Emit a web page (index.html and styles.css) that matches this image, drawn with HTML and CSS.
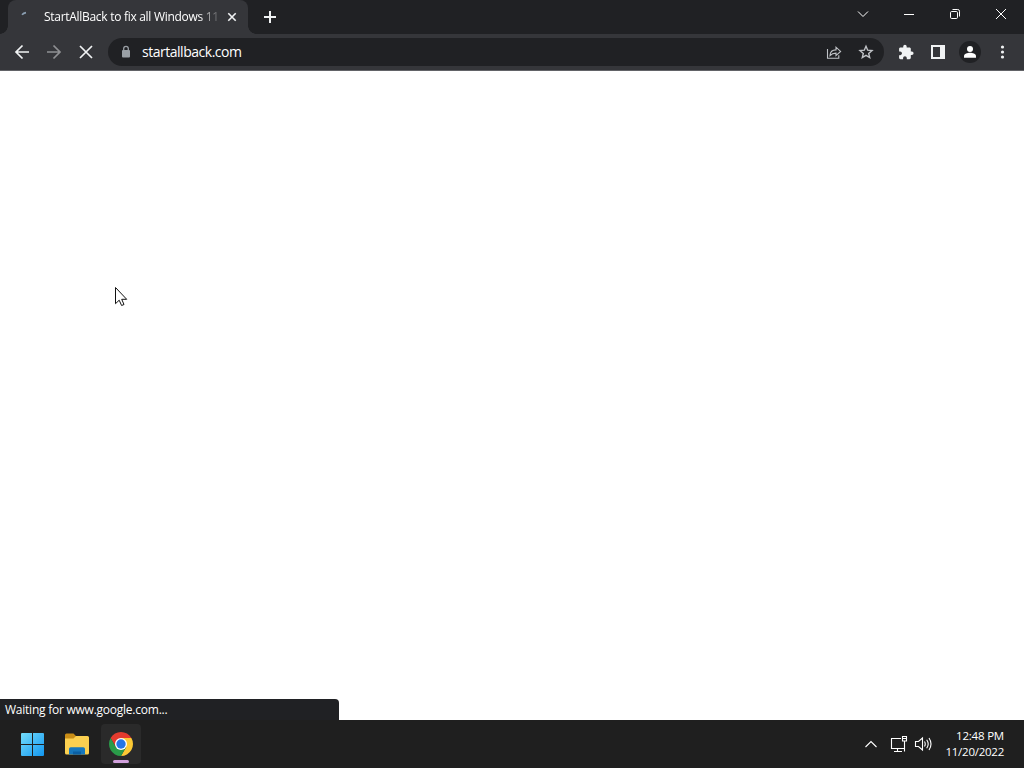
FILE: index.html
```html
<!DOCTYPE html>
<html lang="en">
<head>
<meta charset="utf-8">
<title>Desktop</title>
<link rel="stylesheet" href="styles.css">
</head>
<body>
<div class="desktop">
  <header class="tabstrip">
    <div class="tab">
      <svg class="spinner" width="16" height="16" viewBox="0 0 16 16"><path d="M2 7.700 Q3.500 6 6 5.600" fill="none" stroke="#8b9fb2" stroke-width="1.600"/></svg>
      <span class="tab-title">StartAllBack to fix all Windows 11</span>
      <svg class="tab-close" width="16" height="16" viewBox="0 0 16 16"><path d="M4.300 4.300l7.400 7.400M11.700 4.300l-7.400 7.400" stroke="#f1f3f4" stroke-width="1.600"/></svg>
    </div>
    <svg class="new-tab" width="28" height="28" viewBox="0 0 28 28"><path d="M14 8v12M8 14h12" stroke="#f1f3f4" stroke-width="2"/></svg>
    <div class="window-controls">
      <svg width="46" height="28" viewBox="0 0 46 28"><path d="M18 11.500l5 5 5-5"/></svg>
      <svg width="46" height="28" viewBox="0 0 46 28"><path d="M18 14.500h10"/></svg>
      <svg width="46" height="28" viewBox="0 0 46 28"><rect x="18.500" y="11.500" width="7" height="7" rx="1.200"/><path d="M20.500 9.500h5.200a1.800 1.800 0 0 1 1.800 1.800v5.200"/></svg>
      <svg width="46" height="28" viewBox="0 0 46 28"><path d="M18 9l10 10M28 9L18 19"/></svg>
    </div>
  </header>
  <nav class="toolbar">
    <svg class="tool" viewBox="0 0 28 28"><path d="M21 14H8.500M14.500 7.500L8 14l6.500 6.500" class="line"/></svg>
    <svg class="tool dim" viewBox="0 0 28 28"><path d="M7 14h12.500M13.500 7.500L20 14l-6.500 6.500" class="line"/></svg>
    <svg class="tool" viewBox="0 0 28 28"><path d="M8 8l12 12M20 8L8 20" class="line"/></svg>
    <div class="omnibox">
      <svg class="lock" width="16" height="16" viewBox="0 0 16 16"><path d="M5.700 7V4.600a2.300 2.300 0 0 1 4.600 0V7" fill="none" stroke="#9aa0a6" stroke-width="1.300"/><rect x="4" y="6" width="8" height="7.500" rx="1" fill="#9aa0a6"/></svg>
      <span class="url">startallback.com</span>
      <svg class="box-icon" width="18" height="18" viewBox="0 0 18 18"><path d="M2.500 6v9.300h11.300v-3M5 12.500c.2-4 2.500-5.600 6-5.600V4.200l4.600 4.200L11 12.600v-2.500c-2.700 0-4.500.8-6 2.400z"/></svg>
      <svg class="box-icon" width="18" height="18" viewBox="0 0 18 18"><path d="M9 3.200l1.700 4 4.300.4-3.300 2.800 1 4.200L9 12.400l-3.700 2.200 1-4.200L3 7.600l4.300-.4z" stroke-width="1.400"/></svg>
    </div>
    <svg class="tool" viewBox="0 0 28 28"><path transform="translate(5.700 6) scale(.69)" fill="#f1f3f4" d="M20.500 11H19V7c0-1.100-.9-2-2-2h-4V3.500a2.500 2.500 0 0 0-5 0V5H4c-1.100 0-1.990.9-1.990 2v3.800H3.500c1.490 0 2.700 1.210 2.700 2.700s-1.210 2.700-2.700 2.700H2V20c0 1.100.9 2 2 2h3.800v-1.500c0-1.490 1.210-2.700 2.700-2.700s2.700 1.210 2.700 2.700V22H17c1.100 0 2-.9 2-2v-4h1.500a2.500 2.500 0 0 0 0-5z"/></svg>
    <svg class="tool" viewBox="0 0 28 28"><path fill="#f1f3f4" fill-rule="evenodd" d="M7 7h14v14H7zM9 9v10h7V9z"/></svg>
    <svg class="tool" viewBox="0 0 28 28"><circle cx="14" cy="14" r="11" fill="#202124"/><circle cx="14" cy="10.900" r="3" fill="#fff"/><path d="M8 19.800v-1.600c0-2.400 3.500-3.400 6-3.400s6 1 6 3.400v1.600z" fill="#fff"/></svg>
    <svg class="tool" viewBox="0 0 28 28"><g fill="#f1f3f4"><circle cx="14.500" cy="9" r="1.600"/><circle cx="14.500" cy="14" r="1.600"/><circle cx="14.500" cy="19" r="1.600"/></g></svg>
  </nav>
  <main class="page">
    <svg class="cursor" width="14" height="21" viewBox="0 0 14 21"><path d="M1.500 1.500v16.200l3.700-3.500 2.400 5.300 2.400-1-2.300-5.200h5z" fill="#fff" stroke="#111" stroke-width="1"/></svg>
    <div class="status"><span class="status-text">Waiting for www.google.com...</span></div>
  </main>
  <footer class="taskbar">
    <div class="task"><svg width="24" height="24" viewBox="0 0 24 24">
      <defs><linearGradient id="win" x1="0" y1="0" x2="24" y2="24" gradientUnits="userSpaceOnUse"><stop stop-color="#78e0fc"/><stop offset="1" stop-color="#1296f0"/></linearGradient></defs>
      <path fill="url(#win)" d="M2 1h10v11H1V2a1 1 0 0 1 1-1zM13 1h10a1 1 0 0 1 1 1v10H13zM1 13h11v11H2a1 1 0 0 1-1-1zM13 13h11v10a1 1 0 0 1-1 1H13z"/></svg></div>
    <div class="task"><svg width="26" height="24" viewBox="0 0 26 24">
      <path fill="#c98d16" d="M1 3a1.500 1.500 0 0 1 1.500-1.500H9.500L12 4v5H1z"/>
      <path fill="#fbd050" d="M1 6.500h8.500L12 4h11.500A1.500 1.500 0 0 1 25 5.500v15.500a1.500 1.500 0 0 1-1.500 1.500h-21A1.500 1.500 0 0 1 1 21z"/>
      <path fill="#1677bd" d="M5 22.500v-5.500a1.700 1.700 0 0 1 1.700-1.700h12.600A1.700 1.700 0 0 1 21 17v5.500z"/><path fill="#0b5fa3" d="M9 19.500h8v3H9z"/></svg></div>
    <div class="task active"><svg width="24" height="24" viewBox="0 0 24 24">
      <path fill="#e33b2e" d="M1.610 6A12 12 0 0 1 22.390 6H12L6.800 15z"/>
      <path fill="#fcc934" d="M22.390 6A12 12 0 0 1 12 24l5.200-9L12 6z"/>
      <path fill="#2a9b49" d="M12 24A12 12 0 0 1 1.610 6l5.190 9 5.200 3 5.200-3z"/>
      <circle cx="12" cy="12" r="6" fill="#fff"/><circle cx="12" cy="12" r="4.700" fill="#2475e5"/></svg></div>
    <div class="tray">
      <svg class="tray-up" width="14" height="16" viewBox="0 0 14 16"><path d="M1.500 11L7 5.500l5.500 5.500"/></svg>
      <svg class="tray-net" width="18" height="18" viewBox="0 0 18 18"><path d="M11 3.500H1.500v10h12.500M7.500 13.500v3M4 16.500h8M12.500 1.500h4v4.500h-4zM14.500 6v10.500M12.500 3.500h4"/></svg>
      <svg class="tray-sound" width="18" height="16" viewBox="0 0 18 16"><path d="M1.500 5.500h3L8.500 2v12l-4-3.500h-3zM10.500 5.500q1.500 2.500 0 5M12.700 3.700q3 4.300 0 8.600M15 2q4 6 0 12"/></svg>
      <div class="clock"><span class="time">12:48 PM</span><span class="date">11/20/2022</span></div>
    </div>
  </footer>
</div>
</body>
</html>
```
FILE: styles.css
```css
* { box-sizing: border-box; }
body { margin: 0; font-family: "Open Sans", "Noto Sans", sans-serif; font-size: 12px; color: #fff; }
svg { display: block; flex: none; }
span { white-space: nowrap; }
.desktop { width: 1024px; height: 768px; display: flex; flex-direction: column; overflow: hidden; background: #fff; }

.tabstrip { height: 34px; flex: none; display: flex; background: #202124; padding-left: 8px; }
.tab { position: relative; width: 240px; height: 34px; background: #35363a; border-radius: 8px 8px 0 0; display: flex; align-items: center; padding: 0 8px 0 12px; }
.tab::before, .tab::after { content: ""; position: absolute; bottom: 0; width: 8px; height: 8px; }
.tab::before { left: -8px; background: radial-gradient(circle at 0 0, transparent 7.5px, #35363a 8px); }
.tab::after { right: -8px; background: radial-gradient(circle at 100% 0, transparent 7.5px, #35363a 8px); }
.spinner { margin-top: -4px; width: 16px; }
.tab-title { margin-left: 8px; width: 175px; overflow: hidden; letter-spacing: -0.29px; line-height: 18px; -webkit-mask-image: linear-gradient(to right, #000 155px, transparent 178px); mask-image: linear-gradient(to right, #000 155px, transparent 178px); }
.tab-close { margin-left: 5px; }
.new-tab { margin: 3px 0 0 8px; }
.window-controls { margin-left: auto; display: flex; height: 28px; }
.window-controls path, .window-controls rect { fill: none; stroke: #fff; stroke-width: 1; }

.toolbar { height: 37px; flex: none; background: #35363a; border-bottom: 1px solid #626367; display: flex; align-items: center; gap: 4px; padding: 0 8px; }
.tool { width: 28px; height: 28px; }
.line { fill: none; stroke: #f1f3f4; stroke-width: 1.7; }
.dim { opacity: .48; }
.omnibox { flex: 1; height: 28px; margin: 0 4px; border-radius: 14px; background: #202124; display: flex; align-items: center; padding: 0 9px 0 10px; }
.url { margin: 0 auto 0 8px; font-size: 14px; line-height: 20px; letter-spacing: -0.48px; }
.box-icon { margin-left: 14px; fill: none; stroke: #c0c3c7; stroke-width: 1.1; }

.page { flex: 1; position: relative; display: flex; align-items: flex-end; background: #fff; }
.cursor { position: absolute; left: 114px; top: 215px; }
.status { width: 339px; height: 21px; background: #202124; border-top-right-radius: 4px; padding-left: 5px; line-height: 22px; }
.status-text { letter-spacing: -0.24px; }

.taskbar { height: 48px; flex: none; display: flex; align-items: center; background: #1f1f1f; padding: 0 20px 0 12px; gap: 4.5px; }
.task { position: relative; width: 40px; height: 40px; display: flex; align-items: center; justify-content: center; border-radius: 4px; }
.active { background: #2a2a2a; }
.active::after { content: ""; position: absolute; left: 12px; bottom: 1px; width: 16px; height: 3px; border-radius: 2px; background: #d1a0dc; }
.tray { margin-left: auto; display: flex; align-items: center; }
.tray path { fill: none; stroke: #fff; stroke-width: 1.1; }
.tray-net { margin-left: 12px; }
.tray-sound { margin-left: 6px; }
.clock { width: 72px; display: flex; flex-direction: column; align-items: flex-end; line-height: 16px; font-size: 11.5px; }
.time { letter-spacing: -0.2px; }
.date { letter-spacing: -0.25px; }
```
